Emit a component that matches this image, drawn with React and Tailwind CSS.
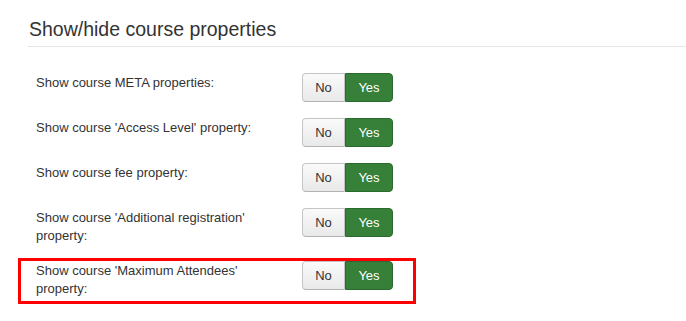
import React from "react";

const rows = [
  { label: "Show course META properties:" },
  { label: "Show course 'Access Level' property:" },
  { label: "Show course fee property:" },
  { label: "Show course 'Additional registration' property:" },
  { label: "Show course 'Maximum Attendees' property:", marked: true },
];

const YesNo = () => (
  <div className="flex h-[29px] text-[13px]">
    <button className="flex w-[43px] items-center justify-center rounded-l-[4px] border border-[#c5c5c5] border-b-[#b3b3b3] bg-gradient-to-b from-[#fafafa] to-[#e9e9e9] text-[#333]">
      No
    </button>
    <button className="flex w-[48px] items-center justify-center rounded-r-[4px] border border-[#2a6b2d] bg-[#36803a] text-white">
      Yes
    </button>
  </div>
);

export default function App() {
  return (
    <div
      className="min-h-[321px] w-[686px] overflow-hidden bg-white pl-[28px] text-[#333]"
      style={{ fontFamily: '"Liberation Sans", Arial, sans-serif' }}
    >
      <h3 className="mt-[17px] border-b border-[#e5e5e5] pb-[5px] pl-[1px] text-[19.5px] leading-[24px] font-normal">
        Show/hide course properties
      </h3>
      <div className="mt-[26px] flex flex-col gap-[16px] pl-[8px]">
        {rows.map((row, i) => (
          <div key={i} className="relative flex items-start">
            <label className="w-[266px] pr-[16px] pt-[1px] text-[13px] leading-[18px]">
              {row.label}
            </label>
            <YesNo />
            {row.marked && (
              <div className="pointer-events-none absolute top-[-3px] left-[-18px] h-[46px] w-[398px] border-[3px] border-[#ff0000]" />
            )}
          </div>
        ))}
      </div>
    </div>
  );
}
